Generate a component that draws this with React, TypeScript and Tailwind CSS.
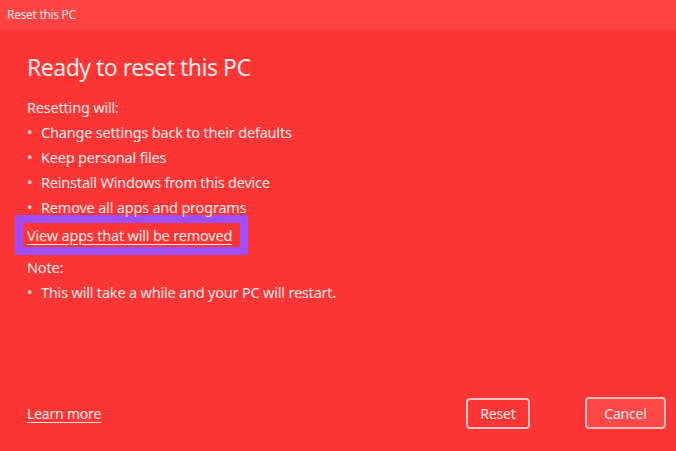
import React from "react";

export default function App() {
  const font = { fontFamily: '"Noto Sans", "Open Sans", sans-serif' };
  return (
    <div className="w-[676px] h-[451px] bg-[#fe3535] text-[#ffeaea] flex flex-col overflow-hidden" style={font}>
      <div className="h-[30px] bg-[#ff4343] flex items-center pl-[7px] text-[12px] text-[#ffe4e4] tracking-[-0.3px]">
        Reset this PC
      </div>
      <div className="flex-1 flex flex-col pl-[27px] pr-[10px]">
        <div className="mt-[22px] text-[23px] leading-[30px] tracking-[-0.5px]">Ready to reset this PC</div>
        <div className="mt-[13px] text-[14.5px] leading-[25px] tracking-[-0.2px]">
          <div>Resetting will:</div>
          <div className="flex"><span className="w-[14px]">•</span>Change settings back to their defaults</div>
          <div className="flex"><span className="w-[14px]">•</span>Keep personal files</div>
          <div className="flex"><span className="w-[14px]">•</span>Reinstall Windows from this device</div>
          <div className="flex"><span className="w-[14px]">•</span>Remove all apps and programs</div>
          <div className="ml-[-12px] mt-[-5px] w-[233px] h-[40px] border-[8px] border-[#a04dff] flex items-center pl-[4px]">
            <span className="underline underline-offset-[3px] whitespace-nowrap">View apps that will be removed</span>
          </div>
          <div>Note:</div>
          <div className="flex"><span className="w-[14px]">•</span>This will take a while and your PC will restart.</div>
        </div>
        <div className="flex-1" />
        <div className="flex items-center mb-[22px]">
          <span className="text-[14px] underline underline-offset-[3px] tracking-[-0.2px]">Learn more</span>
          <div className="flex-1" />
          <button className="w-[64px] h-[31px] rounded-[4px] border-[2px] border-[#ffc4c4] bg-[#fe3535] text-[14px] text-[#ffeaea] tracking-[-0.2px]">Reset</button>
          <button className="ml-[55px] w-[81px] h-[32px] rounded-[4px] border-[2px] border-[#ffbcbc] bg-[#ff4848] text-[14px] text-[#ffeaea] tracking-[-0.2px]">Cancel</button>
        </div>
      </div>
    </div>
  );
}
